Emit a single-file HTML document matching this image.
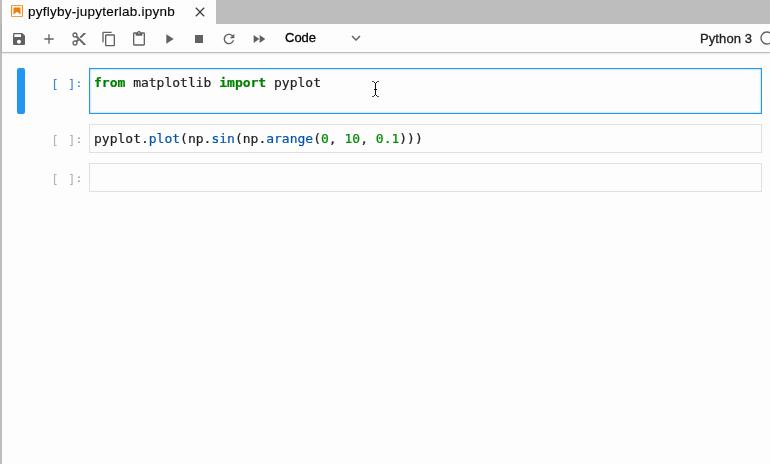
<!DOCTYPE html>
<html>
<head>
<meta charset="utf-8">
<title>pyflyby-jupyterlab.ipynb</title>
<style>
html,body{margin:0;padding:0;background:#fdfdfd;}
body{width:770px;height:464px;overflow:hidden;background:#fdfdfd;position:relative;font-family:"Liberation Sans","Helvetica Neue",Arial,sans-serif;color:#212121;}
.abs{position:absolute;}
.mono,#tabtitle,#celltype,#kernel{will-change:transform;}
#celltype,#kernel{-webkit-text-stroke:0.3px currentColor;}
#tabtitle{-webkit-text-stroke:0.12px currentColor;}
.mono{-webkit-text-stroke:0.2px currentColor;}
#leftstrip{left:0;top:0;width:2px;height:464px;background:#bdbdbd;}
#tabbar{left:2px;top:0;width:768px;height:24px;background:#bdbdbd;}
#tab{left:2px;top:0;width:214px;height:24px;background:#fdfdfd;}
#tabtitle{left:28px;top:3.5px;font-size:13.5px;line-height:16px;color:#000;white-space:nowrap;letter-spacing:0.25px;}
#toolbar{left:2px;top:24px;width:768px;height:28px;background:#fdfdfd;border-bottom:1px solid #bdbdbd;box-shadow:0 0 2px 0 rgba(0,0,0,0.24);}
.ic{position:absolute;width:16px;height:16px;top:31px;}
.ic path{fill:#616161;}
.mono{font-family:"DejaVu Sans Mono","Liberation Mono",monospace;font-size:13px;line-height:17px;white-space:pre;}
.prompt{color:#3d87c5;-webkit-text-stroke:0 !important;}
.col{display:inline-block;transform:translateY(-1.4px) scaleY(0.8);transform-origin:50% 62%;}
.prompt.in{color:#b4b4b4;}
.prompt.in .col{color:#9a9a9a;}
.editor{left:89px;width:671px;border:1px solid #e0e0e0;background:#fdfdfd;}
.k{color:#008000;font-weight:bold;}
.n{color:#008800;}
.p{color:#0055aa;}
.t{color:#212121;}
#celltype{left:285px;top:30px;font-size:13px;line-height:16px;color:#000;}
#kernel{left:700px;top:30.5px;letter-spacing:0.1px;font-size:13px;line-height:16px;color:#212121;}
</style>
</head>
<body>
<div class="abs" id="leftstrip"></div>
<div class="abs" id="toolbar"></div>
<div class="abs" id="tabbar"></div>
<div class="abs" id="tab"></div>
<svg class="abs" style="left:10px;top:4px" width="14" height="14" viewBox="0 0 22 22"><g fill="#f57c00"><path d="M18.700 3.300v15.400H3.300V3.300h15.400m1.500-1.500H1.800v18.300h18.300l.1-18.300z"/><path d="M16.500 16.500l-5.400-4.300-5.600 4.300v-11h11z"/></g></svg>
<div class="abs" id="tabtitle">pyflyby-jupyterlab.ipynb</div>
<svg class="abs" style="left:192px;top:4px" width="16" height="16" viewBox="0 0 24 24"><path fill="#424242" d="M19 6.410L17.590 5 12 10.590 6.410 5 5 6.410 10.590 12 5 17.590 6.410 19 12 13.410 17.590 19 19 17.590 13.410 12z"/></svg>

<svg class="ic" style="left:11px" viewBox="0 0 24 24"><path d="M17 3H5c-1.110 0-2 .9-2 2v14c0 1.100.89 2 2 2h14c1.100 0 2-.9 2-2V7l-4-4zm-5 16c-1.660 0-3-1.340-3-3s1.340-3 3-3 3 1.340 3 3-1.340 3-3 3zm3-10H5V5h10v4z"/></svg>
<svg class="ic" style="left:41px" viewBox="0 0 24 24"><path d="M19 13h-6v6h-2v-6H5v-2h6V5h2v6h6v2z"/></svg>
<svg class="ic" style="left:71px" viewBox="0 0 24 24"><path d="M9.640 7.640c.23-.5.360-1.050.360-1.640 0-2.210-1.790-4-4-4S2 3.790 2 6s1.790 4 4 4c.59 0 1.140-.13 1.640-.36L10 12l-2.360 2.360C7.140 14.130 6.590 14 6 14c-2.210 0-4 1.790-4 4s1.790 4 4 4 4-1.790 4-4c0-.59-.13-1.140-.36-1.640L12 14l7 7h3v-1L9.640 7.640zM6 8c-1.100 0-2-.89-2-2s.9-2 2-2 2 .89 2 2-.9 2-2 2zm0 12c-1.100 0-2-.89-2-2s.9-2 2-2 2 .89 2 2-.9 2-2 2zm6-7.500c-.28 0-.5-.22-.5-.5s.22-.5.5-.5.500.22.500.5-.22.500-.5.500zM19 3l-6 6 2 2 7-7V3z"/></svg>
<svg class="ic" style="left:101px" viewBox="0 0 24 24"><path d="M16 1H4c-1.100 0-2 .9-2 2v14h2V3h12V1zm3 4H8c-1.100 0-2 .9-2 2v14c0 1.100.9 2 2 2h11c1.100 0 2-.9 2-2V7c0-1.100-.9-2-2-2zm0 16H8V7h11v14z"/></svg>
<svg class="ic" style="left:131px" viewBox="0 0 24 24"><path d="M19 2h-4.180C14.400.84 13.300 0 12 0c-1.300 0-2.400.84-2.820 2H5c-1.100 0-2 .9-2 2v16c0 1.100.9 2 2 2h14c1.100 0 2-.9 2-2V4c0-1.100-.9-2-2-2zm-7 0c.55 0 1 .45 1 1s-.45 1-1 1-1-.45-1-1 .45-1 1-1zm7 18H5V4h2v3h10V4h2v16z"/></svg>
<svg class="ic" style="left:161px" viewBox="0 0 24 24"><path d="M8 5v14l11-7z"/></svg>
<svg class="ic" style="left:191px" viewBox="0 0 24 24"><path d="M6 6h12v12H6z"/></svg>
<svg class="ic" style="left:221px" viewBox="0 0 24 24"><path d="M17.650 6.350C16.200 4.900 14.210 4 12 4c-4.420 0-7.990 3.580-7.990 8s3.570 8 7.990 8c3.730 0 6.840-2.550 7.730-6h-2.080c-.82 2.330-3.040 4-5.650 4-3.310 0-6-2.690-6-6s2.690-6 6-6c1.660 0 3.140.69 4.220 1.780L13 11h7V4l-2.350 2.350z"/></svg>
<svg class="ic" style="left:251px" viewBox="0 0 24 24"><path d="M4 18l8.500-6L4 6v12zm9-12v12l8.500-6L13 6z"/></svg>
<div class="abs" id="celltype">Code</div>
<svg class="abs" style="left:347px;top:29px" width="18" height="18" viewBox="0 0 24 24"><path fill="#616161" d="M7.410 8.590L12 13.170l4.590-4.580L18 10l-6 6-6-6 1.410-1.410z"/></svg>
<div class="abs" id="kernel">Python 3</div>
<svg class="abs" style="left:759px;top:30px" width="16" height="16" viewBox="0 0 24 24"><path fill="#616161" d="M12 2C6.470 2 2 6.470 2 12s4.470 10 10 10 10-4.470 10-10S17.530 2 12 2zm0 18c-4.410 0-8-3.590-8-8s3.590-8 8-8 8 3.590 8 8-3.590 8-8 8z"/></svg>

<div class="abs" style="left:17px;top:68px;width:8px;height:46px;background:#2196f3;border-radius:2px;"></div>
<div class="abs mono prompt" style="left:51.4px;top:75.5px;">[<span style="letter-spacing:1.2px"> </span><span style="letter-spacing:-0.7px">]</span><span class="col">:</span></div>
<div class="abs editor" style="top:68px;height:44px;border-color:#2196f3;box-shadow:inset 0 0 2px #64b5f6;"></div>
<div class="abs mono t" style="left:94px;top:74px;"><span class="k">from</span> matplotlib <span class="k">import</span> pyplot</div>

<div class="abs mono prompt in" style="left:51.4px;top:131.5px;">[<span style="letter-spacing:1.2px"> </span><span style="letter-spacing:-0.7px">]</span><span class="col">:</span></div>
<div class="abs editor" style="top:124px;height:27px;"></div>
<div class="abs mono t" style="left:94px;top:130px;">pyplot<span>.</span><span class="p">plot</span>(np<span>.</span><span class="p">sin</span>(np<span>.</span><span class="p">arange</span>(<span class="n">0</span>, <span class="n">10</span>, <span class="n">0.1</span>)))</div>

<div class="abs mono prompt in" style="left:51.4px;top:170.5px;">[<span style="letter-spacing:1.2px"> </span><span style="letter-spacing:-0.7px">]</span><span class="col">:</span></div>
<div class="abs editor" style="top:163px;height:27px;"></div>

<svg class="abs" style="left:368px;top:78px" width="16" height="22" viewBox="368 78 16 22" shape-rendering="crispEdges"><g fill="#111"><rect x="375" y="83" width="1" height="12"/><rect x="374" y="89" width="3" height="1"/><rect x="372" y="81" width="2" height="1" opacity=".75"/><rect x="377" y="81" width="2" height="1" opacity=".75"/><rect x="374" y="82" width="1" height="1"/><rect x="376" y="82" width="1" height="1"/><rect x="374" y="95" width="1" height="1"/><rect x="376" y="95" width="1" height="1"/><rect x="372" y="96" width="2" height="1" opacity=".75"/><rect x="377" y="96" width="2" height="1" opacity=".75"/></g></svg>
</body>
</html>
